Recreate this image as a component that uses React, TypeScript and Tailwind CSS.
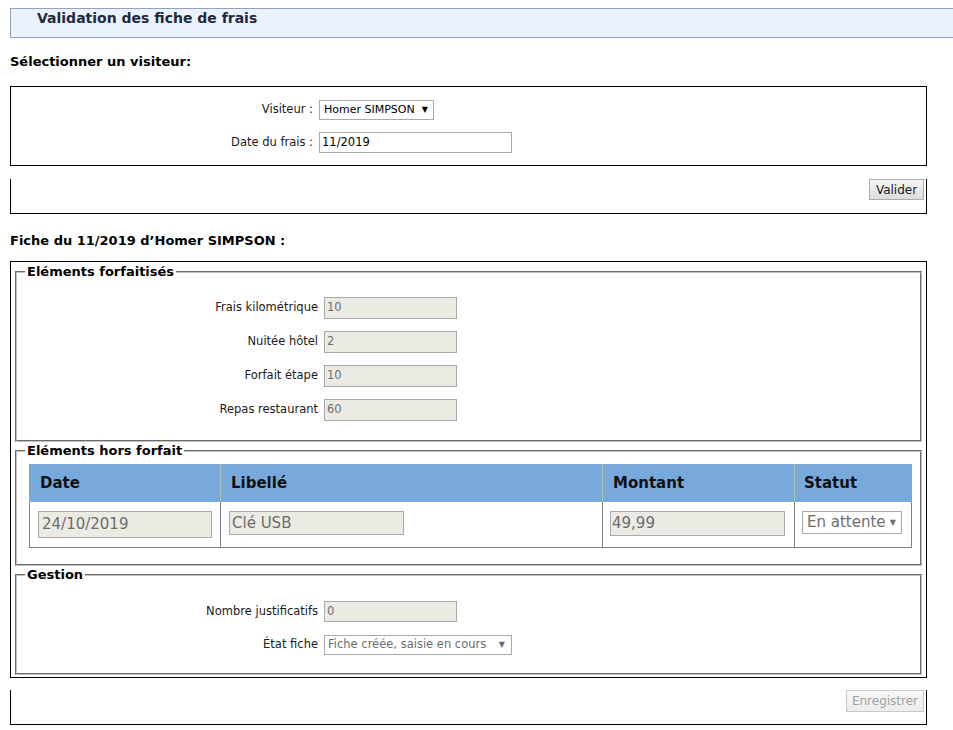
import { ReactNode } from 'react'

const forfaits = [
  { label: 'Frais kilométrique', value: '10' },
  { label: 'Nuitée hôtel', value: '2' },
  { label: 'Forfait étape', value: '10' },
  { label: 'Repas restaurant', value: '60' },
]

const Fieldset = ({ legend, className, children }: { legend: string; className: string; children: ReactNode }) => (
  <fieldset className={`mx-[4px] border-2 border-[#c0c0c0] [border-style:groove] pl-[8px] ${className}`}>
    <legend className="ml-0 px-[2px] text-[13px] font-bold leading-[16px]">{legend}</legend>
    {children}
  </fieldset>
)

const Disabled = ({ value, className }: { value: string; className: string }) => (
  <div className={`flex items-center whitespace-nowrap border border-[#a9a9a9] bg-[#ebebe4] text-[#6d6d6d] ${className}`}>{value}</div>
)

const Row = ({ label, children }: { label: string; children: ReactNode }) => (
  <div className="flex items-center">
    <span className="w-[293px] text-right text-[11.5px] text-[#1a1a1a]">{label}</span>
    <div className="ml-[6px]">{children}</div>
  </div>
)

const App = () => (
  <div className="min-h-screen overflow-hidden bg-white pt-[8px] font-['DejaVu_Sans',sans-serif] text-black">
    <div className="ml-[10px] h-[30px] border-y border-l border-[#8ea2c2] bg-[#ecf2fc] pl-[26px] pt-[1px]">
      <h1 className="text-[14px] font-bold leading-[17px] text-[#1f2940]">Validation des fiche de frais</h1>
    </div>

    <h2 className="ml-[10px] mt-[16px] text-[13px] font-bold leading-[16px]">Sélectionner un visiteur:</h2>

    <div className="ml-[10px] mt-[16px] w-[917px] border border-black pb-[12px] pt-[13px]">
      <div className="flex items-center">
        <span className="w-[302px] text-right text-[11.5px] text-[#1a1a1a]">Visiteur :</span>
        <div className="ml-[6px] flex h-[20px] w-[115px] items-center justify-between whitespace-nowrap border border-[#a9a9a9] bg-white pl-[4px] pr-[5px] text-[11px]">
          <span>Homer SIMPSON</span>
          <span className="text-[8px]">▼</span>
        </div>
      </div>
      <div className="mt-[12px] flex items-center">
        <span className="w-[302px] text-right text-[11.5px] text-[#1a1a1a]">Date du frais :</span>
        <div className="ml-[6px] flex h-[21px] w-[193px] items-center border border-[#a9a9a9] bg-white pl-[2px] text-[11.5px]">11/2019</div>
      </div>
    </div>

    <div className="ml-[10px] mt-[13px] flex h-[35px] w-[917px] items-start justify-end border-x border-b border-black pr-[2px]">
      <button className="h-[21px] w-[55px] border border-[#acacac] bg-gradient-to-b from-[#f6f6f6] to-[#dcdcdc] text-[12px] text-[#1a1a1a]">Valider</button>
    </div>

    <h2 className="ml-[10px] mt-[19px] text-[13px] font-bold leading-[16px]">Fiche du 11/2019 d’Homer SIMPSON :</h2>

    <div className="ml-[10px] mt-[12px] w-[917px] border border-black pb-[2px] pt-[2px]">
      <Fieldset legend="Eléments forfaitisés" className="pb-[19px]">
        <div className="flex flex-col gap-[12px] pt-[17px]">
          {forfaits.map(({ label, value }) => (
            <Row key={label} label={label}>
              <Disabled value={value} className="h-[22px] w-[133px] pl-[2px] text-[11.5px]" />
            </Row>
          ))}
        </div>
      </Fieldset>

      <Fieldset legend="Eléments hors forfait" className="mt-[1px] pb-[16px]">
        <div className="ml-[4px] mt-[5px] w-[883px]">
          <div className="grid h-[38px] grid-cols-[191px_382px_192px_118px] bg-[#78a9dd] text-[15px] font-bold text-[#111]">
            <div className="flex items-center pl-[11px]">Date</div>
            <div className="flex items-center border-l border-[#a7c3b0] pl-[10px]">Libellé</div>
            <div className="flex items-center border-l border-[#a7c3b0] pl-[10px]">Montant</div>
            <div className="flex items-center border-l border-[#a7c3b0] pl-[9px]">Statut</div>
          </div>
          <div className="grid h-[46px] grid-cols-[191px_382px_192px_118px] border-b border-[#808080] text-[15px]">
            <div className="border-l border-[#808080] pl-[8px] pt-[9px]">
              <Disabled value="24/10/2019" className="h-[27px] w-[174px] pl-[3px]" />
            </div>
            <div className="border-l border-[#808080] pl-[8px] pt-[9px]">
              <Disabled value="Clé USB" className="h-[24px] w-[175px] pl-[2px]" />
            </div>
            <div className="border-l border-[#808080] pl-[7px] pt-[9px]">
              <Disabled value="49,99" className="h-[25px] w-[175px] pl-[1px]" />
            </div>
            <div className="border-x border-[#808080] pl-[7px] pt-[9px]">
              <div className="flex h-[23px] w-[100px] items-center justify-between whitespace-nowrap border border-[#a9a9a9] bg-white pl-[4px] pr-[5px] text-[#6d6d6d]">
                <span>En attente</span>
                <span className="text-[8px]">▼</span>
              </div>
            </div>
          </div>
        </div>
      </Fieldset>

      <Fieldset legend="Gestion" className="mt-[1px] pb-[18px]">
        <div className="flex flex-col gap-[13px] pt-[18px]">
          <Row label="Nombre justificatifs">
            <Disabled value="0" className="h-[21px] w-[133px] pl-[2px] text-[11.5px]" />
          </Row>
          <Row label="État fiche">
            <div className="flex h-[20px] w-[188px] items-center justify-between whitespace-nowrap border border-[#a9a9a9] bg-white pl-[3px] pr-[6px] text-[11.5px] text-[#6d6d6d]">
              <span>Fiche créée, saisie en cours</span>
              <span className="text-[8px]">▼</span>
            </div>
          </Row>
        </div>
      </Fieldset>
    </div>

    <div className="ml-[10px] mt-[12px] flex h-[35px] w-[917px] items-start justify-end border-x border-b border-black pr-[2px]">
      <button disabled className="h-[22px] w-[78px] border border-[#c9c9c9] bg-gradient-to-b from-[#f7f7f7] to-[#ececec] text-[12px] text-[#a0a0a0]">Enregistrer</button>
    </div>
  </div>
)

export default App
